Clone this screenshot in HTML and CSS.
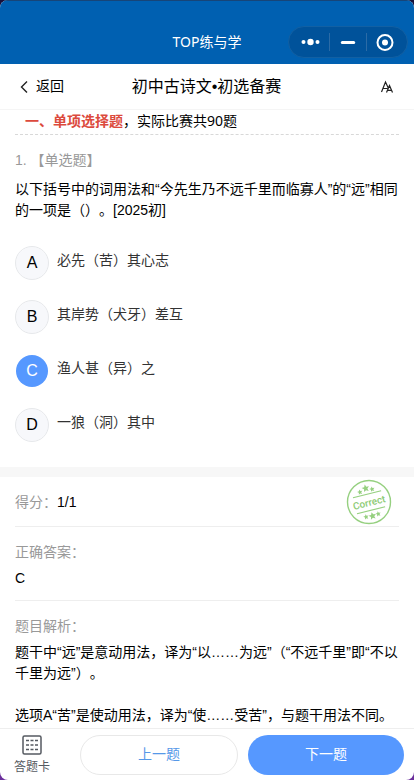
FILE: index.html
```html
<!DOCTYPE html>
<html lang="zh-CN">
<head>
    <meta charset="UTF-8">
    <meta name="viewport" content="width=device-width, initial-scale=1">
    <title>TOP练与学</title>
    <link rel="stylesheet" href="styles.css">
</head>
<body>
<div class="app">
    <!--顶部标题-->
    <header class="topbar">
        <span></span>
        <h1 class="app-name">TOP练与学</h1>
        <div class="capsule">
            <button class="cap-btn" type="button" aria-label="更多">
                <svg width="20" height="20" viewBox="0 0 20 20" fill="#fff"><circle cx="3.500" cy="10" r="2"/><circle cx="10.500" cy="10" r="3.200"/><circle cx="17.500" cy="10" r="2"/></svg>
            </button>
            <button class="cap-btn" type="button" aria-label="最小化">
                <svg width="20" height="20" viewBox="0 0 20 20"><path d="M4.300 10.500h11.400" stroke="#fff" stroke-width="3" stroke-linecap="round"/></svg>
            </button>
            <button class="cap-btn" type="button" aria-label="关闭">
                <svg width="20" height="20" viewBox="0 0 20 20"><circle cx="9" cy="10.500" r="7.500" fill="none" stroke="#fff" stroke-width="2"/><circle cx="9" cy="10.500" r="3" fill="#fff"/></svg>
            </button>
        </div>
    </header>

    <!--导航-->
    <nav class="navbar">
        <button class="back" type="button">
            <svg width="10" height="14" viewBox="0 0 10 14"><path d="M8 1.500L2.500 7L8 12.500" fill="none" stroke="#222" stroke-width="1.400"/></svg>
            返回
        </button>
        <h2 class="nav-title">初中古诗文•初选备赛</h2>
        <button class="font-size" type="button" aria-label="字号">
            <svg width="14" height="14" viewBox="0 0 14 14" fill="none" stroke="#222" stroke-width="1.200"><path d="M1.500 12L5.500 2L8.500 8.500M3 8.500h4.500M6.500 12.500L9.500 5.500L12.500 12.500M7.600 10.300h3.800"/></svg>
        </button>
    </nav>

    <main class="content">
        <section class="question">
            <p class="part"><b>一、单项选择题</b>，实际比赛共90题</p>
            <p class="type">1. 【单选题】</p>
            <p class="stem">以下括号中的词用法和“今先生乃不远千里而临寡人”的“远”相同的一项是（）。[2025初]</p>
            <!--选项-->
            <div class="options">
                <label class="option"><input type="radio" name="answer" value="A"><span class="letter">A</span><span class="option-text">必先（苦）其心志</span></label>
                <label class="option"><input type="radio" name="answer" value="B"><span class="letter">B</span><span class="option-text">其岸势（犬牙）差互</span></label>
                <label class="option"><input type="radio" name="answer" value="C" checked><span class="letter">C</span><span class="option-text">渔人甚（异）之</span></label>
                <label class="option"><input type="radio" name="answer" value="D"><span class="letter">D</span><span class="option-text">一狼（洞）其中</span></label>
            </div>
        </section>

        <!--答案与解析-->
        <section class="result">
            <div class="score">
                <p><span class="name">得分：</span>1/1</p>
                <svg class="stamp" width="46" height="46" viewBox="0 0 46 46">
                    <circle cx="23" cy="23" r="21.500" fill="none" stroke="#96d080" stroke-width="1.400"/>
                    <g transform="rotate(-14 23 23)">
                        <path d="M8.500 15h29M8.500 31.500h29" stroke="#96d080" stroke-width="1.200"/>
                        <text class="stamp-text" x="23" y="27" text-anchor="middle">Correct</text>
                        <g fill="#96d080">
                            <path id="star" d="M23 5l1.100 2.500 2.700.2-2.100 1.800.7 2.700-2.400-1.400-2.400 1.400.7-2.700-2.100-1.800 2.700-.2z"/>
                            <use href="#star" transform="translate(0 28.500)"/>
                            <use href="#star" transform="translate(0.500 5) scale(.7)"/>
                            <use href="#star" transform="translate(13 5) scale(.7)"/>
                            <use href="#star" transform="translate(0.500 30.500) scale(.7)"/>
                            <use href="#star" transform="translate(13 30.500) scale(.7)"/>
                        </g>
                    </g>
                </svg>
            </div>
            <div class="answer">
                <p class="name">正确答案：</p>
                <p class="text">C</p>
            </div>
            <div class="analysis">
                <p class="name">题目解析：</p>
                <p class="text">题干中“远”是意动用法，译为“以……为远”（“不远千里”即“不以千里为远”）。<br><br>选项A“苦”是使动用法，译为“使……受苦”，与题干用法不同。</p>
            </div>
        </section>
    </main>

    <!--底部按钮-->
    <footer class="bottom">
        <button class="card" type="button">
            <svg width="20" height="20" viewBox="0 0 20 20" fill="none" stroke="#555a61"><rect x="1" y="1" width="18" height="18" rx="1.500" stroke-width="1.500"/><path d="M4 5.500h3M8.500 5.500h3M13 5.500h3M4 10h3M8.500 10h3M13 10h3M4 14.500h3M8.500 14.500h3M13 14.500h3" stroke-width="1.500"/></svg>
            答题卡
        </button>
        <button class="btn prev" type="button">上一题</button>
        <button class="btn next" type="button">下一题</button>
    </footer>
</div>
</body>
</html>
```
FILE: styles.css
```css
*{
    margin:0;
    padding:0;
    box-sizing:border-box;
}
body{
    background:linear-gradient(#17103a, #6b2f9c);
    font:14px/21px "Liberation Sans","Noto Sans CJK SC",sans-serif;
    text-spacing-trim:space-all;
    color:#000;
}
button{
    border:0;
    background:none;
    font:inherit;
    color:inherit;
    cursor:pointer;
}
svg{
    display:block;
}
.app{
    height:100vh;
    display:flex;
    flex-direction:column;
    background:#fff;
    border-radius:8px;
    overflow:hidden;
}
/*顶部*/
.topbar{
    height:64px;
    flex:none;
    display:grid;
    grid-template-columns:1fr auto 1fr;
    align-items:end;
    padding:0 6px 6px;
    background:#0060b1;
    border-top:1px solid #174578;
    color:#fff;
}
.app-name{
    font:14px/32px "Noto Sans","Noto Sans CJK SC",sans-serif;
}
.capsule{
    justify-self:end;
    width:120px;
    height:32px;
    display:flex;
    align-items:center;
    border-radius:16px;
    border:1px solid #1260a3;
    background:#00529a;
    padding:0 3px;
}
.cap-btn{
    flex:1;
    height:18px;
    display:flex;
    align-items:center;
    justify-content:center;
}
.cap-btn + .cap-btn{
    border-left:1px solid #2b6ba6;
}
/*导航*/
.navbar{
    height:46px;
    flex:none;
    display:grid;
    grid-template-columns:1fr auto 1fr;
    align-items:center;
    padding:0 20px 0 19px;
    border-bottom:1px solid #f5f5f5;
}
.back{
    justify-self:start;
    display:flex;
    align-items:center;
    gap:7px;
}
.nav-title{
    font-size:16px;
    line-height:24px;
    font-weight:normal;
}
.font-size{
    justify-self:end;
}
/*题目*/
.content{
    flex:1;
    min-height:0;
    overflow-y:auto;
    scrollbar-width:none;
}
.question{
    padding:0 15px 25px;
    border-bottom:10px solid #f7f7f7;
}
.part{
    padding:0 10px 3px;
    border-bottom:1px dashed #d8d8d8;
    font-family:"Noto Sans","Noto Sans CJK SC",sans-serif;
}
.part b{
    color:#dc4a3d;
}
.type{
    margin:15px 0 8px;
    color:#999;
}
.options{
    display:grid;
    gap:20px;
    margin-top:25px;
}
.option{
    position:relative;
    display:flex;
    gap:8px;
    cursor:pointer;
}
.option input{
    position:absolute;
    opacity:0;
}
.letter{
    width:34px;
    height:34px;
    border-radius:50%;
    border:1px solid #e6e8eb;
    background:#f7f8fb;
    background-clip:padding-box;
    font-size:16px;
    line-height:32px;
    text-align:center;
}
.option input:checked + .letter{
    border-color:transparent;
    background-color:#5698ff;
    color:#fff;
}
.option-text{
    padding-top:4px;
    color:#333;
}
/*解析*/
.result{
    padding:0 15px;
}
.score{
    position:relative;
    padding:15px 0 13px;
    border-bottom:1px solid #eee;
}
.name{
    color:#999;
}
.stamp{
    position:absolute;
    top:2px;
    right:7px;
}
.stamp-text{
    font:500 10px Roboto,"Liberation Sans",sans-serif;
    fill:#8dcb75;
}
.answer,
.analysis{
    padding:15px 0 11px;
}
.answer{
    border-bottom:1px solid #eee;
}
.text{
    margin-top:5px;
}
/*底部*/
.bottom{
    height:52px;
    flex:none;
    display:flex;
    align-items:center;
    gap:10px;
    padding:0 10px;
    border-top:1px solid #eee;
}
.card{
    width:60px;
    padding:2px 16px 0 0;
    display:flex;
    flex-direction:column;
    align-items:center;
    gap:2px;
    font-size:12px;
    line-height:20px;
    color:#555a61;
    white-space:nowrap;
}
.btn{
    flex:1;
    height:40px;
    border-radius:20px;
}
.prev{
    border:1px solid #e8e8e8;
    color:#5698e8;
}
.next{
    background:#5698ff;
    color:#fff;
}
```
